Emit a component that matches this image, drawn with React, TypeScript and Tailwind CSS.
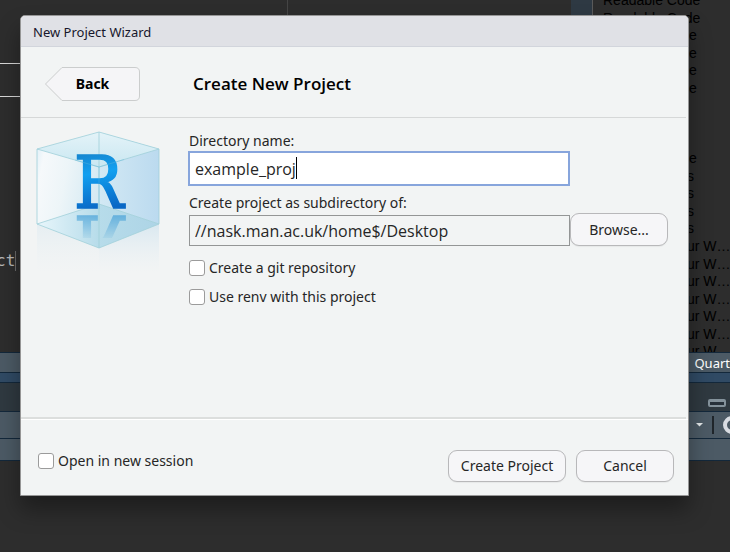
import type { ReactNode } from "react";

const outline: { text: string; align: string }[] = [
  { text: "Readable Code", align: "pl-[10px]" },
  { text: "Readable Code", align: "pl-[10px]" },
  ...Array.from({ length: 4 }, () => ({ text: "e", align: "pl-[96px]" })),
  ...Array.from({ length: 3 }, () => ({ text: "", align: "" })),
  { text: "e", align: "pl-[96px]" },
  ...Array.from({ length: 4 }, () => ({ text: "s", align: "pl-[94px]" })),
  ...Array.from({ length: 7 }, () => ({ text: "ur W…", align: "pl-[94px]" })),
];

function Workbench() {
  return (
    <div className="flex h-full flex-col bg-[#2d2d2d]">
      <div className="flex h-[352px] shrink-0 overflow-hidden">
        <div className="flex flex-1">
          <div className="w-[288px] border-r border-[#454545]">
            <div className="mt-[63px] h-[34px] border-y border-[#d8d8d8]" />
            <div className="mt-[154px] flex h-[20px] items-center">
              <span className="-ml-[4px] font-['DejaVu_Sans_Mono',monospace] text-[16px] leading-[20px] text-[#b9b9b9]">
                ct
              </span>
              <span className="h-[20px] w-px bg-[#6a6a6a]" />
            </div>
          </div>
        </div>
        <div className="w-[21px] bg-[#2e3943]" />
        <div className="w-[138px] border-l border-[#5a5a5a]">
          <ul className="-mt-[8px] grid h-[369px] auto-rows-fr font-['Liberation_Sans',sans-serif] text-[14px] leading-[17px] text-black">
            {outline.map((row, i) => (
              <li key={i} className={`whitespace-nowrap ${row.align}`}>
                {row.text}
              </li>
            ))}
          </ul>
        </div>
      </div>
      <div className="flex h-[21px] items-center justify-end border-y border-[#13283b] bg-[#4c5a65]">
        <span className="text-[13px] leading-[18px] text-white">Quart</span>
      </div>
      <div className="h-[9px] bg-[#304a64]" />
      <div className="flex h-[30px] items-end justify-end border-y border-[#13283b] bg-[#2f3940] pr-[4px] pb-[4px]">
        <span className="h-[8px] w-[18px] rounded-[2px] border-2 border-t-[3px] border-[#84929b] bg-[#27313a]" />
      </div>
      <div className="flex h-[26px] items-center justify-end gap-[9px] bg-[#4c5a65]">
        <svg width="7" height="4" viewBox="0 0 7 4" aria-hidden="true">
          <path d="M0 0h7L3.500 3.500z" fill="#e4e8ea" />
        </svg>
        <span className="h-[18px] w-[2px] bg-[#20262b]" />
        <svg width="7" height="18" viewBox="0 0 7 18" aria-hidden="true">
          <circle cx="9" cy="9" r="7" fill="none" stroke="#d9dde3" strokeWidth="4" />
        </svg>
      </div>
      <div className="h-[23px] border-y border-[#13283b] bg-[#4c5a65]" />
    </div>
  );
}

function CubeLogo() {
  return (
    <svg className="block" width="130" height="150" viewBox="0 0 130 150" role="img" aria-label="R project">
      <defs>
        <linearGradient id="left" x1="0" x2="1" y1="0.2" y2="0.5">
          <stop offset="0" stopColor="#e4f1f8" />
          <stop offset="0.12" stopColor="#f6f9fb" />
          <stop offset="0.5" stopColor="#edf5f8" />
          <stop offset="1" stopColor="#d5eaf3" />
        </linearGradient>
        <linearGradient id="right" x1="0" x2="1" y1="0" y2="0">
          <stop offset="0" stopColor="#d3e9f4" />
          <stop offset="1" stopColor="#bbdaef" />
        </linearGradient>
        <linearGradient id="top" x1="0" x2="0" y1="0" y2="1">
          <stop offset="0" stopColor="#e4f3f8" />
          <stop offset="1" stopColor="#c9e7f1" />
        </linearGradient>
        <linearGradient id="floor" x1="0" x2="1" y1="0" y2="0">
          <stop offset="0" stopColor="#e8f6fb" />
          <stop offset="0.5" stopColor="#b7dcea" />
          <stop offset="1" stopColor="#add4e6" />
        </linearGradient>
        <linearGradient id="below" gradientUnits="userSpaceOnUse" x1="0" x2="0" y1="93" y2="142">
          <stop offset="0" stopColor="#d3e5ef" stopOpacity="0.8" />
          <stop offset="1" stopColor="#e6eff4" stopOpacity="0" />
        </linearGradient>
        <linearGradient id="ink" gradientUnits="userSpaceOnUse" x1="45" x2="55" y1="25" y2="80">
          <stop offset="0" stopColor="#1688d2" />
          <stop offset="0.35" stopColor="#12a0f0" />
          <stop offset="1" stopColor="#0867c5" />
        </linearGradient>
        <linearGradient id="fade" gradientUnits="userSpaceOnUse" x1="0" x2="0" y1="84" y2="107">
          <stop offset="0" stopColor="#fff" stopOpacity="0.65" />
          <stop offset="1" stopColor="#fff" stopOpacity="0.1" />
        </linearGradient>
        <mask id="mirror" maskUnits="userSpaceOnUse" x="0" y="84" width="130" height="23">
          <rect y="84" width="130" height="23" fill="url(#fade)" />
        </mask>
      </defs>
      <path d="M3 93L65 117V144H3z" fill="url(#below)" opacity="0.5" />
      <path d="M65 117L125 93V144H65z" fill="url(#below)" />
      <path d="M3 18L65 1V73L3 93z" fill="url(#left)" />
      <path d="M65 1L125 18V93L65 73z" fill="url(#right)" />
      <path d="M3 93L65 73L125 93L65 117z" fill="url(#floor)" />
      <path d="M3 18L65 1L125 18L65 36z" fill="url(#top)" />
      <path
        d="M3 18L65 1L125 18L65 36zM3 18V93M125 18V93M65 1V117M3 93L65 73L125 93L65 117z"
        fill="none"
        stroke="#a0cfd9"
        strokeWidth="0.8"
      />
      <g fontFamily="'DejaVu Serif Condensed', 'DejaVu Serif', serif" fontSize="73" strokeWidth="1.7">
        <text x="40" y="77" fill="url(#ink)" stroke="url(#ink)">R</text>
        <g mask="url(#mirror)">
          <text x="40" y="-85" transform="scale(1 -1)" fill="#3b9bd6" stroke="#3b9bd6">R</text>
        </g>
      </g>
      <path d="M41 29L65 36V78M65 36L90 28.500" fill="none" stroke="#5fb8dc" strokeOpacity="0.5" strokeWidth="0.8" />
    </svg>
  );
}

function CheckRow({ children }: { children: ReactNode }) {
  return (
    <label className="flex items-center gap-[4px]">
      <input
        type="checkbox"
        className="size-[16px] shrink-0 appearance-none rounded-[3px] border border-[#9b9b9b] bg-white checked:bg-[#3478c6]"
      />
      <span>{children}</span>
    </label>
  );
}

const dialogButton =
  "rounded-[9px] border border-[#b8b8ba] bg-[#f6f6f8] text-center shadow-[0_1px_1px_rgba(0,0,0,0.05)]";

export default function App() {
  return (
    <main className="relative h-screen overflow-hidden font-['Noto_Sans','Open_Sans',sans-serif] text-[14px] leading-[20px] text-[#262626]">
      <Workbench />
      <section
        role="dialog"
        aria-labelledby="wizard-title"
        className="absolute inset-x-0 top-[15px] mr-[41px] ml-[20px] rounded-t-[5px] border border-[#969696] bg-[#f2f4f4] shadow-[0_14px_22px_rgba(0,0,0,0.35)]"
      >
        <h1
          id="wizard-title"
          className="h-[31px] rounded-t-[4px] border-b border-[#d2d5dc] bg-[#e0e1e6] pl-[12px] text-[13px] leading-[32px] text-[#17172c]"
        >
          New Project Wizard
        </h1>
        <header className="mr-[2px] flex h-[71px] items-center border-b border-[#d6d8d8] pt-[3px] pl-[24px]">
          <button className="relative h-[34px] w-[95px] text-[14px] font-bold text-black">
            <svg className="absolute inset-0" width="95" height="34" viewBox="0 0 95 34" aria-hidden="true">
              <path d="M.5 17L17 .5H90Q94.500.5 94.500 5V29Q94.500 33.500 90 33.500H17z" fill="#f5f5f7" stroke="#cbcdcd" />
            </svg>
            <span className="relative">Back</span>
          </button>
          <h2 className="pl-[53px] font-['Open_Sans','Noto_Sans',sans-serif] text-[17px] font-semibold text-black">
            Create New Project
          </h2>
        </header>
        <div className="mr-[2px] flex h-[301px] border-b-2 border-[#dcdedd] pt-[13px] pl-[13px]">
          <CubeLogo />
          <form className="flex-1 pl-[25px]">
            <label htmlFor="dir" className="block">Directory name:</label>
            <div className="relative -ml-px w-[382px]">
              <input
                id="dir"
                defaultValue="example_proj"
                className="block h-[35px] w-full border-2 border-[#87a5dc] bg-white px-[5px] font-['Open_Sans','Noto_Sans',sans-serif] text-[16px] outline-none"
              />
              <span className="absolute top-[6px] left-[108px] h-[22px] w-px bg-black" />
            </div>
            <label htmlFor="parent" className="mt-[7px] block">Create project as subdirectory of:</label>
            <div className="flex items-center">
              <input
                id="parent"
                readOnly
                defaultValue="//nask.man.ac.uk/home$/Desktop"
                className="mt-[2px] h-[31px] w-[381px] border border-[#949696] bg-transparent px-[5px] font-['Open_Sans','Noto_Sans',sans-serif] text-[16px] outline-none"
              />
              <button type="button" className={`${dialogButton} h-[33px] w-[98px]`}>Browse...</button>
            </div>
            <div className="mt-[12px] flex flex-col gap-[9px]">
              <CheckRow>Create a git repository</CheckRow>
              <CheckRow>Use renv with this project</CheckRow>
            </div>
          </form>
        </div>
        <footer className="flex h-[76px] items-center gap-[10px] border-t border-white pt-[16px] pr-[14px] pl-[17px]">
          <div className="mr-auto -mt-[10px]">
            <CheckRow>Open in new session</CheckRow>
          </div>
          <button className={`${dialogButton} h-[32px] w-[118px]`}>Create Project</button>
          <button className={`${dialogButton} h-[32px] w-[98px]`}>Cancel</button>
        </footer>
      </section>
    </main>
  );
}
